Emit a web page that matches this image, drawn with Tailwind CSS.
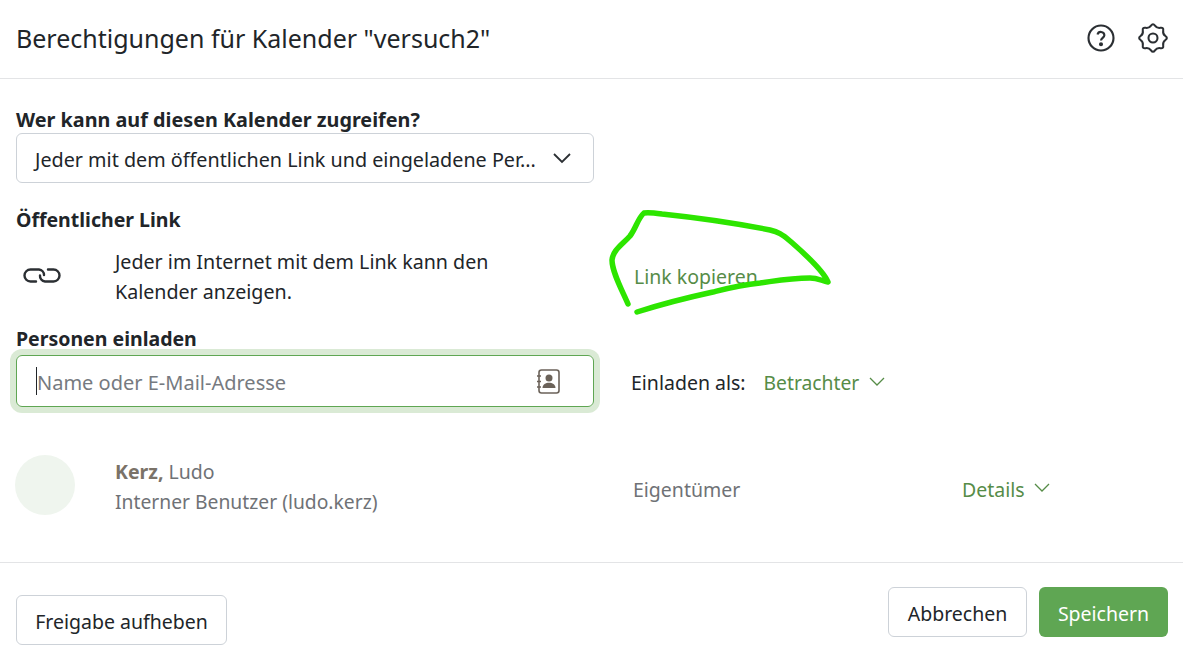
<!doctype html>
<html lang="de"><head><meta charset="utf-8"><script src="https://cdn.jsdelivr.net/npm/@tailwindcss/browser@4"></script></head>
<body class="bg-white">
<div class="relative w-[1183px] h-[664px] overflow-hidden bg-white text-[#212529] font-['Noto_Sans',sans-serif] text-[19.5px]">
<header class="h-[79px] flex items-center justify-between pl-[16px] pr-[15px] border-b border-[#e3e4e6]">
<h1 class="text-[25px] font-normal leading-[36px] pb-[2px]">Berechtigungen für Kalender "versuch2"</h1>
<div class="flex items-center gap-[22px] pb-[2px]">
<svg class="w-[30px] h-[30px]" viewBox="0 0 24 24" fill="none" stroke="#2b2f33" stroke-width="1.7"><circle cx="12" cy="12" r="10"/><path d="M9.2 9.200a2.800 2.800 0 0 1 5.500.6c0 1.900-2.700 2.300-2.700 4.200"/><circle cx="12" cy="17" r=".8" fill="#2b2f33"/></svg>
<svg class="w-[30px] h-[30px]" viewBox="1 1 22 22" fill="none" stroke="#2b2f33" stroke-width="1.500" stroke-linejoin="round"><circle cx="12" cy="12" r="3.300"/><path d="M10.545 2.890Q12 .8 13.455 2.890T17.415 4.530T19.470 6.585T21.110 10.545T21.110 13.455T19.470 17.415T17.415 19.470T13.455 21.110T10.545 21.110T6.585 19.470T4.530 17.415T2.890 13.455T2.890 10.545T4.530 6.585T6.585 4.530T10.545 2.890Z"/></svg>
</div>
</header>
<main class="px-[16px] pt-[28px]">
<div class="font-bold leading-[26px] text-[19.8px]">Wer kann auf diesen Kalender zugreifen?</div>
<div class="w-[578px] h-[50px] border border-[#cdd2d8] rounded-[6px] flex items-center justify-between pl-[18px] pr-[21px]"><span class="text-[19.75px] pt-[4px]">Jeder mit dem öffentlichen Link und eingeladene Per...</span><svg class="w-[20px] h-[14px]" viewBox="0 0 20 14" fill="none" stroke="#2b2f33" stroke-width="1.8"><path d="M2 3l8 8 8-8"/></svg></div>
<div class="mt-[24px] font-bold leading-[26px]">Öffentlicher Link</div>
<div class="flex mt-[14px] h-[60px]">
<div class="w-[99px] pl-[7px] pt-[21px]"><svg class="w-[38px] h-[15px] block" viewBox="0 0 38 15" fill="none" stroke="#2b2f33" stroke-width="2.400" stroke-linecap="round"><path d="M21 7a5.500 5.500 0 0 0-5-5.500H7.500a6 6 0 0 0 0 12H13"/><path d="M17 7.500a5.500 5.500 0 0 0 5 6h8.500a6 6 0 0 0 0-12H25"/></svg></div>
<p class="w-[420px] leading-[30px] text-[19.65px]">Jeder im Internet mit dem Link kann den Kalender anzeigen.</p>
<a class="ml-[99px] mt-[15px] h-[30px] leading-[30px] text-[#568c47]">Link kopieren</a>
</div>
<div class="mt-[19px] font-bold leading-[26px]">Personen einladen</div>
<div class="flex items-center mt-[3px]">
<div class="w-[578px] h-[52px] border border-[#5fa653] rounded-[6px] ring-[6px] ring-[#daead5] flex items-center justify-between pl-[19px] pr-[33px]"><span class="text-[#767a80] text-[20px] border-l border-[#212529] h-[28px] leading-[32px]">Name oder E-Mail-Adresse</span><svg class="w-[24px] h-[25px]" viewBox="0 0 24 25" fill="none" stroke="#6b6259" stroke-width="1.600"><rect x="3" y="1" width="20" height="23" rx="2.500"/><path d="M1 7h4M1 12.500h4M1 18h4"/><circle cx="13" cy="9" r="3.500" fill="#6b6259" stroke="none"/><path d="M6.500 19c0-7 13-7 13 0z" fill="#6b6259" stroke="none"/></svg></div>
<span class="ml-[37px] pt-[4px]">Einladen als:</span>
<span class="ml-[18px] pt-[4px] text-[#568c47] text-[19.3px]">Betrachter</span>
<svg class="ml-[10px] mt-[2px] w-[16px] h-[16px]" viewBox="0 0 16 16" fill="none" stroke="#568c47" stroke-width="1.300"><path d="M1 4l7 7 7-7"/></svg>
</div>
<div class="flex items-start mt-[48px] h-[60px]">
<div class="w-[60px] h-[60px] rounded-full bg-[#eff5ee] ml-[-1px]"></div>
<div class="ml-[40px] mt-[2px] w-[518px] leading-[30px] text-[#6f7276]"><div><b class="font-bold text-[#7a7268]">Kerz,</b> Ludo</div><div class="text-[19.3px]">Interner Benutzer (ludo.kerz)</div></div>
<span class="text-[#6f7276] w-[329px] mt-[20px] leading-[30px]">Eigentümer</span>
<span class="text-[#568c47] mt-[20px] leading-[30px]">Details</span>
<svg class="ml-[9px] mt-[25px] w-[16px] h-[16px]" viewBox="0 0 16 16" fill="none" stroke="#568c47" stroke-width="1.300"><path d="M1 4l7 7 7-7"/></svg>
</div>
</main>
<footer class="absolute left-0 right-0 top-[562px] h-[102px] border-t border-[#e3e4e6] flex justify-between pl-[16px] pr-[15px]">
<button class="mt-[32px] w-[211px] h-[50px] pt-[4px] border border-[#cdd2d8] rounded-[6px]">Freigabe aufheben</button>
<div class="flex gap-[12px] mt-[24px]"><button class="w-[139px] h-[50px] pt-[3px] border border-[#cdd2d8] rounded-[6px]">Abbrechen</button><button class="w-[129px] h-[50px] pt-[3px] bg-[#5fa653] text-white rounded-[6px]">Speichern</button></div>
</footer>
<svg class="absolute left-0 top-0 pointer-events-none" width="1183" height="664" fill="none"><path d="M628 304C622 290 612 272 612 260C613 250 622 245 630 236C636 228 638 218 644 213C648 212 655 213 662 214C700 218 745 225 770 230C778 232 782 234 790 241C800 250 822 268 828 282C822 281 818 278 810 278C790 278 775 281 760 283C740 285 725 289 713 292C690 297 665 303 637 312" stroke="#2de500" stroke-width="5.500" stroke-linecap="round" stroke-linejoin="round"/></svg>
</div>
</body></html>
